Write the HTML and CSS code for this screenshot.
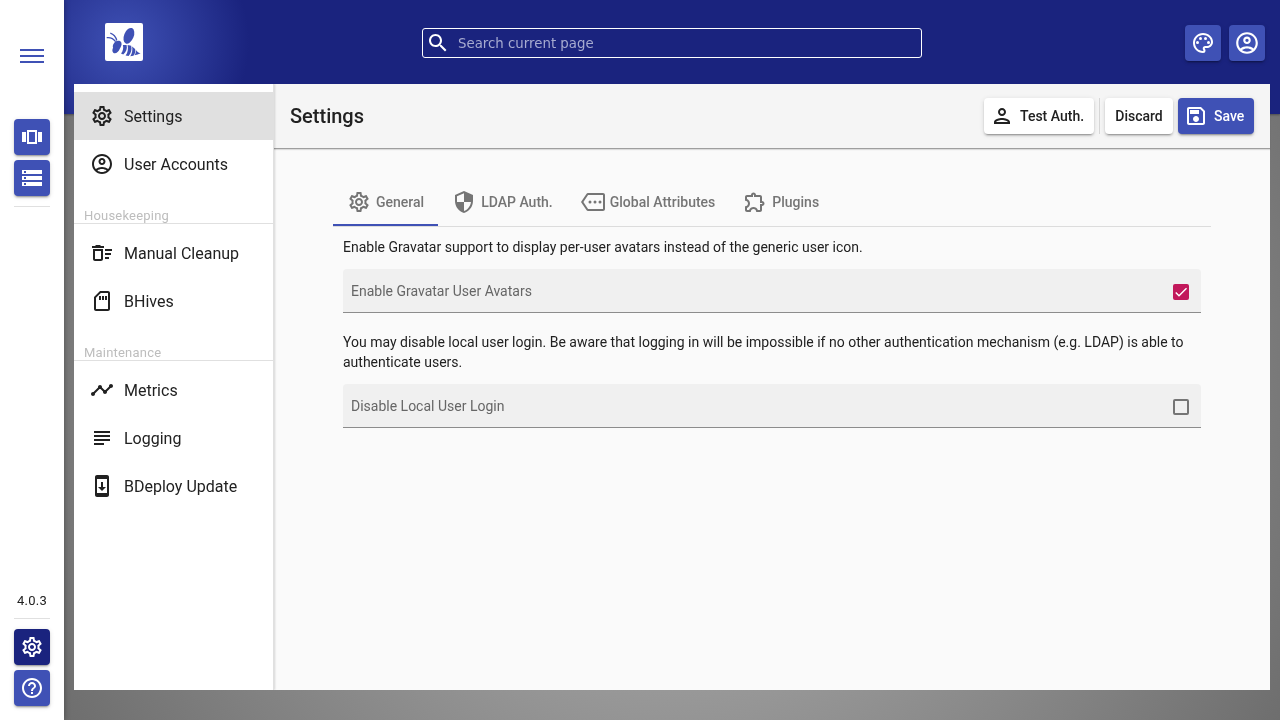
FILE: index.html
```html
<!DOCTYPE html>
<html lang="en">
<head>
<meta charset="utf-8">
<title>Settings</title>
<link rel="stylesheet" href="styles.css">
</head>
<body>
<svg class="sprite" xmlns="http://www.w3.org/2000/svg">
  <symbol id="settings" viewBox="0 0 24 24"><path fill-rule="evenodd" d="M19.43 12.98c.04-.32.07-.64.07-.98 0-.34-.03-.66-.07-.98l2.11-1.65c.19-.15.24-.42.12-.64l-2-3.46c-.09-.16-.26-.25-.44-.25-.06 0-.12.01-.17.03l-2.49 1c-.52-.4-1.08-.73-1.69-.98l-.38-2.65C14.46 2.18 14.25 2 14 2h-4c-.25 0-.46.18-.49.42l-.38 2.65c-.61.25-1.17.59-1.69.98l-2.49-1c-.06-.02-.12-.03-.18-.03-.17 0-.34.09-.43.25l-2 3.46c-.13.22-.07.49.12.64l2.11 1.65c-.04.32-.07.65-.07.98 0 .33.03.66.07.98l-2.11 1.65c-.19.15-.24.42-.12.64l2 3.46c.09.16.26.25.44.25.06 0 .12-.01.17-.03l2.49-1c.52.4 1.08.73 1.69.98l.38 2.65c.03.24.24.42.49.42h4c.25 0 .46-.18.49-.42l.38-2.65c.61-.25 1.17-.59 1.69-.98l2.49 1c.06.02.12.03.18.03.17 0 .34-.09.43-.25l2-3.46c.12-.22.07-.49-.12-.64l-2.11-1.65zm-1.98-1.71c.04.31.05.52.05.73 0 .21-.02.43-.05.73l-.14 1.13.89.7 1.08.84-.7 1.21-1.27-.51-1.04-.42-.9.68c-.43.32-.84.56-1.25.73l-1.06.43-.16 1.13-.2 1.35h-1.4l-.19-1.35-.16-1.13-1.06-.43c-.43-.18-.83-.41-1.23-.71l-.91-.7-1.06.43-1.27.51-.7-1.21 1.08-.84.89-.7-.14-1.13c-.03-.31-.05-.54-.05-.74s.02-.43.05-.73l.14-1.13-.89-.7-1.08-.84.7-1.21 1.27.51 1.04.42.9-.68c.43-.32.84-.56 1.25-.73l1.06-.43.16-1.13.2-1.35h1.39l.19 1.35.16 1.13 1.06.43c.43.18.83.41 1.23.71l.91.7 1.06-.43 1.27-.51.7 1.21-1.07.85-.89.7.14 1.13zM12 8c-2.21 0-4 1.79-4 4s1.79 4 4 4 4-1.79 4-4-1.79-4-4-4zm0 6c-1.1 0-2-.9-2-2s.9-2 2-2 2 .9 2 2-.9 2-2 2z"/></symbol>
  <symbol id="account" viewBox="0 0 24 24"><path fill-rule="evenodd" d="M12 2C6.48 2 2 6.48 2 12s4.48 10 10 10 10-4.48 10-10S17.52 2 12 2zM7.35 18.5C8.66 17.56 10.26 17 12 17s3.34.56 4.65 1.5c-1.31.94-2.91 1.5-4.65 1.5s-3.34-.56-4.65-1.5zm10.79-1.38C16.45 15.8 14.32 15 12 15s-4.45.8-6.14 2.12C4.7 15.73 4 13.95 4 12c0-4.42 3.58-8 8-8s8 3.58 8 8c0 1.95-.7 3.73-1.86 5.12zM12 6c-1.93 0-3.5 1.57-3.5 3.5S10.07 13 12 13s3.5-1.57 3.5-3.5S13.93 6 12 6zm0 5c-.83 0-1.5-.67-1.5-1.5S11.17 8 12 8s1.5.67 1.5 1.5S12.83 11 12 11z"/></symbol>
</svg>
<div class="app">
  <aside class="rail">
    <div class="burger"><i></i><i></i><i></i></div>
    <div class="rail-group">
      <button class="square"><svg viewBox="0 0 24 24"><path fill-rule="evenodd" d="M2 7h4v10H2V7zm5 12h10V5H7v14zM9 7h6v10H9V7zm9 0h4v10h-4V7z"/></svg></button>
      <button class="square"><svg viewBox="0 0 24 24"><path fill-rule="evenodd" d="M2 20h20v-4H2v4zm2-3h2v2H4v-2zM2 4v4h20V4H2zm4 3H4V5h2v2zm-4 7h20v-4H2v4zm2-3h2v2H4v-2z"/></svg></button>
    </div>
    <div class="rail-line"></div>
    <div class="version">4.0.3</div>
    <div class="rail-line low"></div>
    <div class="rail-group bottom">
      <button class="square active"><svg><use href="#settings"/></svg></button>
      <button class="square"><svg viewBox="0 0 24 24"><path d="M11 18h2v-2h-2v2zm1-16C6.48 2 2 6.48 2 12s4.48 10 10 10 10-4.48 10-10S17.52 2 12 2zm0 18c-4.41 0-8-3.59-8-8s3.59-8 8-8 8 3.59 8 8-3.59 8-8 8zm0-14c-2.21 0-4 1.79-4 4h2c0-1.1.9-2 2-2s2 .9 2 2c0 2-3 1.75-3 5h2c0-2.25 3-2.5 3-5 0-2.21-1.79-4-4-4z"/></svg></button>
    </div>
  </aside>
  <div class="stage">
    <header class="header">
      <div class="logo"><svg viewBox="0 0 38 38">
        <ellipse cx="23.900" cy="12.800" rx="4.800" ry="8.300" transform="rotate(22 23.900 12.800)"/>
        <path d="M9 20.200c2-3 6.500-3 7.300-.6 1 2.200-.6 4.600-1.600 6.400-1.300 2.900-3.800 5.200-6.200 4-1.600-1.300-1.300-3.900-.4-5.300-.6-1.400-.2-3.200.9-4.500z"/>
        <path d="M17.900 21.900l3.700.2c.9 3.800-.4 7-3.400 9.500l-2.200-1c2-2.600 2.700-5.500 1.900-8.700zM22.600 21.900l3.600.9c.9 4-.1 7.300-2.600 10.200l-3-.6c2.300-3 2.800-6.700 2-10.500zM27.100 23.500l3 2.400c.5 2.700-.1 5-1.700 6.900l-3.100.4c1.900-3 2.400-6.400 1.800-9.700zM30.900 26.700c.8 1.700 2 2.700 4.700 3.600-2 .9-3.900 1.500-5.900 2 .9-1.800 1.300-3.600 1.200-5.600z"/>
        <path class="feeler" d="M5.300 10.200c3 1 5.400 3.300 6.500 7.300M1.700 14.700c3.600-.4 6.800.9 8.900 4"/>
      </svg></div>
      <div class="search"><svg viewBox="0 0 24 24"><path d="M15.500 14h-.79l-.28-.27C15.410 12.590 16 11.110 16 9.500 16 5.910 13.090 3 9.500 3S3 5.910 3 9.500 5.910 16 9.500 16c1.610 0 3.090-.59 4.230-1.570l.27.28v.79l5 4.990L20.490 19l-4.990-5zm-6 0C7.010 14 5 11.990 5 9.500S7.010 5 9.500 5 14 7.010 14 9.500 11.990 14 9.500 14z"/></svg><span>Search current page</span></div>
      <div class="header-actions">
        <button class="square"><svg viewBox="0 0 24 24"><path d="M12 22C6.490 22 2 17.510 2 12S6.490 2 12 2s10 4.040 10 9c0 3.310-2.690 6-6 6h-1.770c-.28 0-.5.22-.5.5 0 .12.05.23.13.33.41.47.64 1.060.64 1.670A2.500 2.500 0 0 1 12 22zm0-18c-4.410 0-8 3.590-8 8s3.590 8 8 8c.28 0 .5-.22.5-.5a.54.54 0 0 0-.14-.35c-.41-.46-.63-1.050-.63-1.650a2.500 2.500 0 0 1 2.500-2.500H16c2.210 0 4-1.790 4-4 0-3.860-3.590-7-8-7z"/><circle cx="6.500" cy="11.500" r="1.500"/><circle cx="9.500" cy="7.500" r="1.500"/><circle cx="14.500" cy="7.500" r="1.500"/><circle cx="17.500" cy="11.500" r="1.500"/></svg></button>
        <button class="square large"><svg><use href="#account"/></svg></button>
      </div>
    </header>
    <main class="panel">
      <nav class="drawer">
        <a class="item selected"><svg><use href="#settings"/></svg>Settings</a>
        <a class="item"><svg><use href="#account"/></svg>User Accounts</a>
        <div class="section">Housekeeping</div>
        <a class="item"><svg viewBox="0 0 24 24"><path fill-rule="evenodd" d="M15 16h4v2h-4zm0-8h7v2h-7zm0 4h6v2h-6zM3 18c0 1.100.9 2 2 2h6c1.100 0 2-.9 2-2V8H3v10zm2-8h6v8H5v-8zm5-6H6L5 5H2v2h12V5h-3z"/></svg>Manual Cleanup</a>
        <a class="item"><svg viewBox="0 0 24 24"><path fill-rule="evenodd" d="M18 2h-8L4 8v12c0 1.100.9 2 2 2h12c1.100 0 2-.9 2-2V4c0-1.100-.9-2-2-2zm0 18H6V8.830L10.830 4H18v16zM9 7h2v4H9V7zm3 0h2v4h-2V7zm3 0h2v4h-2V7z"/></svg>BHives</a>
        <div class="section">Maintenance</div>
        <a class="item"><svg viewBox="0 0 24 24"><path d="M23 8c0 1.100-.9 2-2 2-.18 0-.35-.02-.51-.07l-3.560 3.550c.05.16.07.34.07.52 0 1.100-.9 2-2 2s-2-.9-2-2c0-.18.02-.36.07-.52l-2.550-2.550c-.16.05-.34.07-.52.07s-.36-.02-.52-.07l-4.550 4.560c.05.16.07.33.07.51 0 1.100-.9 2-2 2s-2-.9-2-2 .9-2 2-2c.18 0 .35.02.51.07l4.560-4.550C8.020 9.360 8 9.180 8 9c0-1.100.9-2 2-2s2 .9 2 2c0 .18-.02.36-.07.52l2.550 2.550c.16-.05.34-.07.52-.07s.36.02.52.07l3.550-3.560C19.020 8.350 19 8.180 19 8c0-1.100.9-2 2-2s2 .9 2 2z"/></svg>Metrics</a>
        <a class="item"><svg viewBox="0 0 24 24"><path d="M14 17H4v2h10v-2zm6-8H4v2h16V9zM4 15h16v-2H4v2zM4 5v2h16V5H4z"/></svg>Logging</a>
        <a class="item"><svg viewBox="0 0 24 24"><path fill-rule="evenodd" d="M17 1.010L7 1c-1.100 0-2 .9-2 2v18c0 1.100.9 2 2 2h10c1.100 0 2-.9 2-2V3c0-1.100-.9-1.990-2-1.990zM17 19H7V5h10v14zm-1-6h-3V8h-2v5H8l4 4 4-4z"/></svg>BDeploy Update</a>
      </nav>
      <section class="content">
        <div class="toolbar">
          <h1>Settings</h1>
          <button class="btn test"><svg viewBox="0 0 24 24"><path d="M12 6c1.100 0 2 .9 2 2s-.9 2-2 2-2-.9-2-2 .9-2 2-2m0 10c2.700 0 5.800 1.290 6 2H6c.23-.72 3.310-2 6-2m0-12C9.790 4 8 5.790 8 8s1.790 4 4 4 4-1.790 4-4-1.790-4-4-4zm0 10c-2.670 0-8 1.340-8 4v2h16v-2c0-2.660-5.330-4-8-4z"/></svg>Test Auth.</button>
          <div class="divider"></div>
          <button class="btn discard">Discard</button>
          <button class="btn save"><svg viewBox="0 0 24 24"><path d="M17 3H5c-1.110 0-2 .9-2 2v14c0 1.100.89 2 2 2h14c1.100 0 2-.9 2-2V7l-4-4zm2 16H5V5h11.170L19 7.830V19zm-7-7c-1.660 0-3 1.340-3 3s1.340 3 3 3 3-1.340 3-3-1.340-3-3-3zM6 6h9v4H6z"/></svg>Save</button>
        </div>
        <div class="body">
          <div class="tabs">
            <div class="tab current"><svg><use href="#settings"/></svg>General</div>
            <div class="tab"><svg viewBox="0 0 24 24"><path d="M12 1L3 5v6c0 5.550 3.840 10.740 9 12 5.160-1.260 9-6.450 9-12V5l-9-4zm0 10.990h7c-.53 4.120-3.280 7.790-7 8.940V12H5V6.300l7-3.110v8.800z"/></svg>LDAP Auth.</div>
            <div class="tab"><svg viewBox="0 0 24 24"><path fill-rule="evenodd" d="M22 3H7c-.69 0-1.230.35-1.590.88L0 12l5.410 8.110c.36.53.97.89 1.660.89H22c1.100 0 2-.9 2-2V5c0-1.100-.9-2-2-2zm0 16H7.070L2.400 12l4.660-7H22v14z"/><circle cx="9" cy="12" r="1.500"/><circle cx="14" cy="12" r="1.500"/><circle cx="19" cy="12" r="1.500"/></svg>Global Attributes</div>
            <div class="tab"><svg viewBox="0 0 24 24"><path d="M10.500 4.500c.28 0 .5.22.5.5v2h6v6h2c.28 0 .5.22.5.5s-.22.5-.5.5h-2v6h-2.120c-.68-1.750-2.390-3-4.380-3s-3.700 1.250-4.380 3H4v-2.120c1.750-.68 3-2.390 3-4.380 0-1.990-1.240-3.700-2.990-4.380L4 7h6V5c0-.28.22-.5.5-.5m0-2C9.120 2.500 8 3.620 8 5H4c-1.100 0-1.990.9-1.990 2v3.800h.29c1.490 0 2.700 1.210 2.700 2.700s-1.210 2.700-2.700 2.700H2V20c0 1.100.9 2 2 2h3.800v-.3c0-1.490 1.210-2.700 2.700-2.700s2.700 1.210 2.700 2.700v.3H17c1.100 0 2-.9 2-2v-4c1.380 0 2.500-1.120 2.500-2.500S20.380 11 19 11V7c0-1.100-.9-2-2-2h-4c0-1.380-1.120-2.500-2.500-2.500z"/></svg>Plugins</div>
          </div>
          <div class="form">
            <p>Enable Gravatar support to display per-user avatars instead of the generic user icon.</p>
            <label class="field">Enable Gravatar User Avatars<span class="check on"><svg viewBox="0 0 24 24"><path d="M4.100 12.700 9 17.600 20.300 6.300"/></svg></span></label>
            <p>You may disable local user login. Be aware that logging in will be impossible if no other authentication mechanism (e.g. LDAP) is able to authenticate users.</p>
            <label class="field">Disable Local User Login<span class="check"></span></label>
          </div>
        </div>
      </section>
    </main>
  </div>
</div>
</body>
</html>
```
FILE: styles.css
```css
* { box-sizing: border-box; }
body { margin: 0; font-family: Roboto, sans-serif; color: #212121; overflow: hidden; }
svg { fill: currentColor; width: 24px; height: 24px; flex: none; display: block; }
.sprite { display: none; }
button { border: 0; padding: 0; font-family: inherit; }
.app { display: flex; width: 1280px; height: 720px; }
.rail { width: 64px; background: #fff; display: flex; flex-direction: column; align-items: center; padding: 49px 0 14px; z-index: 2; box-shadow: 0 0 6px rgba(0,0,0,.35); }
.burger { display: flex; flex-direction: column; gap: 4px; width: 24px; margin-bottom: 56px; }
.burger i { height: 2px; background: #3f51b5; }
.rail-group { display: flex; flex-direction: column; gap: 5px; }
.square { width: 36px; height: 36px; border-radius: 4px; background: #3f51b5; color: #fff; display: flex; align-items: center; justify-content: center; box-shadow: 0 3px 1px -2px rgba(0,0,0,.2), 0 2px 2px rgba(0,0,0,.14), 0 1px 5px rgba(0,0,0,.12); }
.square.active { background: #1a237e; }
.square.large svg { width: 26px; height: 26px; }
.rail-line { width: 36px; height: 1px; background: #e0e0e0; margin-top: 10px; }
.rail-line.low { margin: 8px 0 10px; }
.version { margin-top: auto; font-size: 13px; line-height: 18px; letter-spacing: .2px; }
.stage { width: 1216px; height: 720px; will-change: transform; background: radial-gradient(circle at center, #bdbdbd, #6e6e6e); }
.header { height: 114px; padding: 23px 15px 0 41px; display: flex; align-items: flex-start; background: radial-gradient(circle at 60px 42px, #3f51b5, #1a237e 125px); box-shadow: 0 1px 2px rgba(0,0,0,.35); }
.logo { width: 38px; height: 38px; border-radius: 2px; background: #fff; color: #3f51b5; }
.logo svg { width: 38px; height: 38px; }
.feeler { fill: none; stroke: currentColor; stroke-width: 1.3; }
.search { width: 500px; height: 30px; margin: 5px 0 0 279px; border: 1px solid #fff; border-radius: 3px; color: #fff; display: flex; align-items: center; padding-left: 3px; gap: 8px; font: 13.33px "DejaVu Sans", sans-serif; }
.search span { color: #a7abd0; }
.header-actions { display: flex; gap: 8px; margin: 2px 0 0 auto; }
.panel { width: 1196px; height: 606px; margin: -30px 0 0 10px; display: flex; position: relative; background: #fafafa; }
.drawer { width: 200px; padding-top: 8px; background: #fff; border-right: 1px solid #e0e0e0; box-shadow: 1px 0 2px rgba(0,0,0,.15); z-index: 1; clip-path: inset(0 -5px 0 0); }
.item { display: flex; align-items: center; height: 48px; padding-left: 16px; gap: 10px; font-size: 16px; }
.selected { background: #e0e0e0; }
.section { height: 36px; margin-bottom: 5px; padding: 20px 0 0 10px; border-bottom: 1px solid #e0e0e0; color: #bdbdbd; font-size: 13px; line-height: 16px; letter-spacing: .2px; }
.content { flex: 1; }
.toolbar { height: 65px; padding: 0 16px; background: #f5f5f5; border-bottom: 1px solid #9e9e9e; box-shadow: 0 1px 1px rgba(0,0,0,.12); display: flex; align-items: center; }
h1 { margin: 0 auto 0 0; font-size: 20px; font-weight: 500; line-height: 32px; }
.btn { height: 36px; border-radius: 4px; display: flex; align-items: center; font-size: 14px; font-weight: 500; color: #212121; background: #fff; box-shadow: 0 3px 1px -2px rgba(0,0,0,.2), 0 2px 2px rgba(0,0,0,.14), 0 1px 5px rgba(0,0,0,.12); }
.test { width: 110px; padding-left: 6px; gap: 6px; }
.divider { width: 1px; height: 36px; background: #d6d6d6; margin: 0 5px; }
.discard { width: 68px; justify-content: center; margin-right: 5px; }
.save { width: 76px; padding-left: 6px; gap: 6px; color: #fff; background: #3f51b5; }
.body { padding: 29px 59px 0; }
.tabs { display: flex; height: 49px; border-bottom: 1px solid #dcdcdc; }
.tab { height: 48px; padding: 0 14px; display: flex; align-items: center; gap: 5px; font-size: 14px; font-weight: 500; color: #757575; }
.current { border-bottom: 2px solid #3f51b5; padding-top: 2px; }
.form { padding: 10px; }
.form p { margin: 0; font-size: 14px; line-height: 20px; }
.field { height: 44px; margin: 12px 0 19px; padding: 0 12px 0 8px; border-bottom: 1px solid #8c8c8c; border-radius: 4px 4px 0 0; background: #f0f0f0; color: #666; font-size: 14px; display: flex; justify-content: space-between; align-items: center; }
.check { width: 16px; height: 16px; border: 2px solid #757575; border-radius: 2px; margin-top: 2px; }
.on { border: 0; background: #c2185b; }
.on svg { width: 16px; height: 16px; fill: none; stroke: #fff; stroke-width: 2.1; }
```
